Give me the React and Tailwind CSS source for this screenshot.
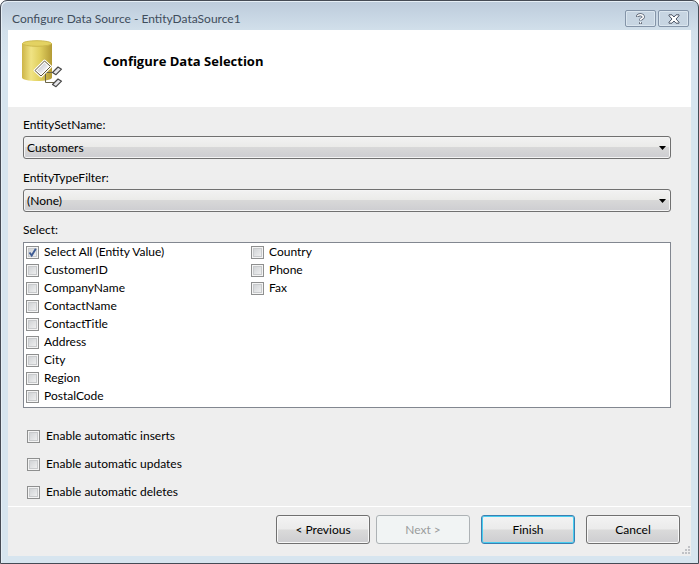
import { useState } from "react";

const FIELDS = [
  "Select All (Entity Value)",
  "CustomerID",
  "CompanyName",
  "ContactName",
  "ContactTitle",
  "Address",
  "City",
  "Region",
  "PostalCode",
  "Country",
  "Phone",
  "Fax",
];

const OPTIONS = ["inserts", "updates", "deletes"];

function DataSourceIcon() {
  return (
    <svg width="44" height="50" viewBox="0 0 44 50" aria-hidden="true">
      <defs>
        <linearGradient id="side" x1="0" x2="1">
          <stop offset="0" stopColor="#cdb548" />
          <stop offset="0.3" stopColor="#f0e384" />
          <stop offset="0.6" stopColor="#e0cf5e" />
          <stop offset="1" stopColor="#b39a35" />
        </linearGradient>
        <linearGradient id="tag" x1="0" y1="0" x2="1" y2="1">
          <stop offset="0" stopColor="#a9acb4" />
          <stop offset="0.6" stopColor="#ececf0" />
          <stop offset="1" stopColor="#ffffff" />
        </linearGradient>
      </defs>
      <path d="M2 4.500v34c0 2 6.500 3.500 15 3.500s15-1.500 15-3.500v-34z" fill="url(#side)" />
      <ellipse cx="17" cy="4.500" rx="14.500" ry="2.800" fill="#e3d262" stroke="#cdb94c" strokeWidth="1" />
      <path d="M26 33.500H34M25.500 33V43.500H34" fill="none" stroke="#6b6448" />
      <path d="M15 31.500 24.500 22l6 5.500-9.500 9.500z" fill="url(#tag)" stroke="#fff" strokeWidth="3" strokeLinejoin="round" />
      <path d="M15 31.500 24.500 22l6 5.500-9.500 9.500z" fill="none" stroke="#5f5636" strokeLinejoin="round" />
      <path d="M32.500 33.500l5.500-5.500 3.500 2.200-5.500 5.500z" fill="#e4e4e8" stroke="#484848" strokeWidth="1.200" strokeLinejoin="round" />
      <path d="M32.500 45.500l5.500-5.500 3.500 2.200-5.500 5.500z" fill="#e4e4e8" stroke="#484848" strokeWidth="1.200" strokeLinejoin="round" />
    </svg>
  );
}

function Check({ label, checked, onChange, gap }) {
  return (
    <label className={`flex h-[18px] items-center ${gap}`}>
      <span className="relative h-[13px] w-[13px] shrink-0">
        <input
          type="checkbox"
          checked={checked}
          onChange={onChange}
          className="peer block h-[13px] w-[13px] appearance-none border border-[#8e8f8f] bg-linear-to-br from-[#c9cccf] to-[#f6f6f6] shadow-[inset_0_0_0_1px_#f4f4f4,inset_0_0_0_2px_#c8cacc]"
        />
        <svg
          viewBox="0 0 13 13"
          className="pointer-events-none absolute inset-0 hidden peer-checked:block"
          aria-hidden="true"
        >
          <path d="M3.500 6.500 5.700 9.500 9.800 2.800" fill="none" stroke="#3f5c94" strokeWidth="1.900" />
        </svg>
      </span>
      <span>{label}</span>
    </label>
  );
}

function Picker({ id, label, value }) {
  return (
    <div className="flex flex-col gap-[3px]">
      <label htmlFor={id} className="leading-4">
        {label}
      </label>
      <div className="relative">
        <select
          id={id}
          className="block h-[23px] w-full appearance-none rounded-[3px] border border-[#707070] bg-[linear-gradient(#f2f2f2,#ebebe9_46%,#d8d8d8_50%,#cdcdd1)] pl-[3px] shadow-[inset_0_0_0_1px_#f4f4f4]"
        >
          <option>{value}</option>
        </select>
        <svg
          width="7"
          height="4"
          viewBox="0 0 7 4"
          className="pointer-events-none absolute top-[10px] right-[5px]"
          aria-hidden="true"
        >
          <path d="M0 0h7L3.500 4z" fill="#000" />
        </svg>
      </div>
    </div>
  );
}

const BUTTON = "h-[29px] w-[94px] rounded-[3px] border";
const RAISED =
  "bg-[linear-gradient(#f3f3f3,#ebebeb_48%,#dadada_52%,#cdcdd0)]";

export default function App() {
  const [picked, setPicked] = useState({ "Select All (Entity Value)": true });
  const toggle = (name) => setPicked((p) => ({ ...p, [name]: !p[name] }));

  return (
    <div className="min-h-screen bg-white font-[Lato,'Open_Sans',sans-serif] text-[12px] text-black">
      <main className="flex min-h-screen flex-col rounded-t-[7px] border border-[#454b55] bg-[#d7e5ef] bg-[linear-gradient(#bccbdb,#d2e0eb_30px,#d7e5ef_60px)] px-[7px] pb-[7px] shadow-[inset_1px_1px_0_#e6eff6]">
        <header className="flex h-[29px] shrink-0 items-center justify-between pt-[6px] pl-1">
          <h1 className="text-[#3f4d5c]">Configure Data Source - EntityDataSource1</h1>
          <div className="flex gap-[2px] pr-[2px]">
            <button
              aria-label="Help"
              className="flex h-[17px] w-[31px] items-center justify-center rounded-[2px] border border-[#8494a8] bg-[#c7d5e2] shadow-[inset_0_0_0_1px_#dbe6ef]"
            >
              <svg width="9" height="12" viewBox="0 0 9 12" aria-hidden="true">
                <path d="M1.500 4C1.500 1 7.300 1 7.300 3.900 7.300 5.600 4.500 5.400 4.500 7.600M4.500 9v2" fill="none" stroke="#4b5566" strokeWidth="3" />
                <path d="M1.500 3.600C1.500 1 7.300 1 7.300 3.900 7.300 5.600 4.500 5.400 4.500 7.200M4.500 9v1.500" fill="none" stroke="#fff" strokeWidth="1.600" />
              </svg>
            </button>
            <button
              aria-label="Close"
              className="flex h-[17px] w-[31px] items-center justify-center rounded-[2px] border border-[#8494a8] bg-[#c7d5e2] shadow-[inset_0_0_0_1px_#dbe6ef]"
            >
              <svg width="12" height="10" viewBox="0 0 12 10" aria-hidden="true">
                <path d="M1 .8h3L6 3 8 .8h3v1L8 5l3 3.200v1H8L6 7 4 9.200H1v-1L4 5 1 1.800z" fill="#fff" stroke="#4b5566" />
              </svg>
            </button>
          </div>
        </header>

        <section className="flex h-[77px] shrink-0 bg-white pt-[9px] pl-3">
          <DataSourceIcon />
          <h2 className="pt-3 pl-[39px] font-['Open_Sans','Noto_Sans',sans-serif] text-[13px] leading-5 font-bold">
            Configure Data Selection
          </h2>
        </section>

        <section className="flex grow flex-col bg-[#eeeeee] pt-[10px] pr-5 pb-[3px] pl-[15px]">
          <div className="flex flex-col gap-[11px]">
            <Picker id="set" label="EntitySetName:" value="Customers" />
            <Picker id="type" label="EntityTypeFilter:" value="(None)" />
          </div>
          <fieldset className="mt-[10px]">
            <legend className="leading-4">Select:</legend>
            <div className="mt-1 grid grid-flow-col auto-cols-[225px] grid-rows-9 border border-[#828790] bg-white pb-[2px] pl-[2px]">
              {FIELDS.map((name) => (
                <Check
                  key={name}
                  label={name}
                  gap="gap-[5px]"
                  checked={!!picked[name]}
                  onChange={() => toggle(name)}
                />
              ))}
            </div>
          </fieldset>
          <div className="mt-[19px] flex flex-col gap-[10px] pl-1">
            {OPTIONS.map((name) => (
              <Check
                key={name}
                label={`Enable automatic ${name}`}
                gap="gap-[6px]"
                checked={!!picked[name]}
                onChange={() => toggle(name)}
              />
            ))}
          </div>
        </section>

        <footer className="relative flex h-[50px] shrink-0 justify-end border-t border-white bg-[#eeeeee] pt-2 pr-[11px]">
          <div className="flex gap-[11px]">
            <div className="flex gap-[6px]">
              <button className={`${BUTTON} ${RAISED} border-[#707070] shadow-[inset_0_0_0_1px_#f8f8f8]`}>
                &lt; Previous
              </button>
              <button disabled className={`${BUTTON} border-[#adb2b5] bg-[#f1f4f4] text-[#9a9c9c]`}>
                Next &gt;
              </button>
            </div>
            <button className={`${BUTTON} ${RAISED} border-[#3c7fb1] shadow-[inset_0_0_0_1px_#48cdf0]`}>
              Finish
            </button>
            <button className={`${BUTTON} ${RAISED} border-[#707070] shadow-[inset_0_0_0_1px_#f8f8f8]`}>
              Cancel
            </button>
          </div>
          <svg
            width="9"
            height="9"
            viewBox="0 0 9 9"
            className="absolute right-[1px] bottom-[1px]"
            aria-hidden="true"
          >
            <path d="M7 0h2v2H7zM7 3h2v2H7zM4 3h2v2H4zM7 6h2v2H7zM4 6h2v2H4zM1 6h2v2H1z" fill="#c0c2c6" />
          </svg>
        </footer>
      </main>
    </div>
  );
}
